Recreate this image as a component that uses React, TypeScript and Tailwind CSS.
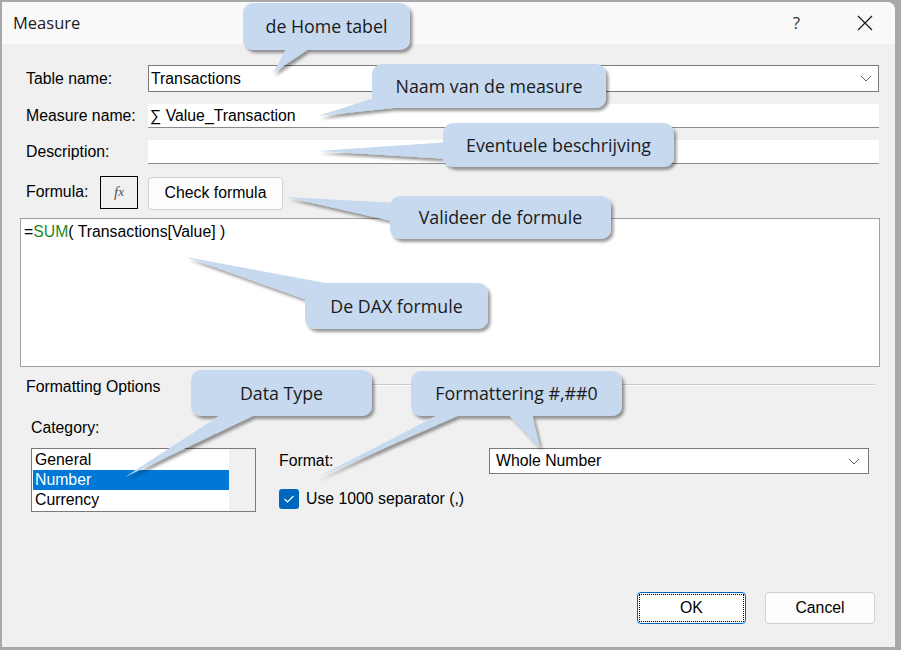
import React from 'react';

type Callout = {
  text: string;
  x: number;
  y: number;
  w: number;
  h: number;
  tails: [number, number][][];
};

const callouts: Callout[] = [
  { text: 'de Home tabel', x: 243, y: 3, w: 167, h: 47, tails: [[[287, 48], [310, 48], [273, 73]]] },
  { text: 'Naam van de measure', x: 372, y: 64, w: 234, h: 44, tails: [[[380, 96], [402, 107], [318, 116]]] },
  { text: 'Eventuele beschrijving', x: 443, y: 123, w: 231, h: 44, tails: [[[450, 142], [450, 159], [318, 151]]] },
  { text: 'Valideer de formule', x: 390, y: 196, w: 221, h: 43, tails: [[[396, 203], [396, 222], [286, 197]]] },
  { text: 'De DAX formule', x: 305, y: 283, w: 183, h: 46, tails: [[[336, 285], [307, 300], [186, 257]]] },
  { text: 'Data Type', x: 191, y: 370, w: 181, h: 46, tails: [[[222, 414], [257, 414], [125, 477]]] },
  {
    text: 'Formattering #,##0',
    x: 411,
    y: 371,
    w: 211,
    h: 45,
    tails: [
      [[440, 414], [462, 414], [316, 478]],
      [[508, 414], [532, 414], [540, 448]],
    ],
  },
];

const ui = { fontFamily: '"Liberation Sans", Arial, sans-serif' };
const seg = { fontFamily: '"Open Sans", "Noto Sans", sans-serif' };

function Chevron() {
  return (
    <svg width="12" height="7" viewBox="0 0 12 7">
      <polyline points="1,1 6,6 11,1" fill="none" stroke="#606060" strokeWidth="1" />
    </svg>
  );
}

function Overlay() {
  return (
    <>
      <svg className="absolute inset-0 pointer-events-none" width="901" height="650">
        <defs>
          <filter id="sh" x="-20%" y="-20%" width="140%" height="160%">
            <feDropShadow dx="2.5" dy="3" stdDeviation="1.6" floodColor="#000" floodOpacity="0.4" />
          </filter>
        </defs>
        {callouts.map((c, i) => (
          <g key={i} filter="url(#sh)" fill="#c6d9ef">
            <rect x={c.x} y={c.y} width={c.w} height={c.h} rx="10" />
            {c.tails.map((t, j) => (
              <polygon key={j} points={t.map((p) => p.join(',')).join(' ')} />
            ))}
          </g>
        ))}
      </svg>
      {callouts.map((c, i) => (
        <div
          key={i}
          className="absolute flex items-center justify-center text-[17.8px] text-[#1b1b1b] pointer-events-none"
          style={{ left: c.x, top: c.y, width: c.w, height: c.h, ...seg }}
        >
          {c.text}
        </div>
      ))}
    </>
  );
}

export default function App() {
  return (
    <div className="relative w-[901px] h-[650px] bg-[#a8a8a8] pt-[2px] pl-[2px] overflow-hidden" style={ui}>
      <div className="w-[893px] h-[645px] bg-[#f0f0f0] rounded-tr-[8px] flex flex-col overflow-hidden text-[15.8px] text-black">
        {/* title bar */}
        <div className="h-[42px] bg-[#f9f9f9] flex items-center pl-[11px] pr-[22px]">
          <span className="text-[16.5px] text-[#1a1a1a]" style={seg}>
            Measure
          </span>
          <span className="ml-auto text-[17px] text-[#333] mr-[57px]" style={seg}>
            ?
          </span>
          <svg width="16" height="16" viewBox="0 0 16 16">
            <path d="M1 1 L15 15 M15 1 L1 15" stroke="#1a1a1a" strokeWidth="1.2" />
          </svg>
        </div>

        <div className="flex flex-col pr-[16px]">
          {/* table name */}
          <div className="flex items-center h-[27px] mt-[21px]">
            <div className="w-[146px] pl-[24px]">Table name:</div>
            <div className="flex-1 h-full bg-white border border-[#7a7a7a] flex items-center justify-between pl-[2px] pr-[6px]">
              <span>Transactions</span>
              <Chevron />
            </div>
          </div>
          {/* measure name */}
          <div className="flex items-center h-[24px] mt-[12px]">
            <div className="w-[146px] pl-[24px]">Measure name:</div>
            <div className="flex-1 h-full bg-white border-b border-[#8a8a8a] flex items-center pl-[2px]">
              ∑ Value_Transaction
            </div>
          </div>
          {/* description */}
          <div className="flex items-center h-[24px] mt-[12px]">
            <div className="w-[146px] pl-[24px]">Description:</div>
            <div className="flex-1 h-full bg-white border-b border-[#8a8a8a]" />
          </div>
          {/* formula */}
          <div className="flex items-center h-[34px] mt-[11px]">
            <div className="w-[98px] pl-[24px]">Formula:</div>
            <div className="w-[38px] h-[33px] border border-black flex items-center justify-center text-[#555] italic text-[15px]" style={{ fontFamily: '"Liberation Serif", serif' }}>
              f<span className="text-[13px]">x</span>
            </div>
            <div className="ml-[10px] w-[135px] h-[33px] mt-[2px] bg-[#fdfdfd] border border-[#d0d0d0] rounded-[4px] flex items-center justify-center">
              Check formula
            </div>
          </div>
          {/* formula editor */}
          <div className="ml-[18px] mr-[-1px] mt-[9px] h-[149px] bg-white border border-[#a0a0a0] pl-[3px] pt-[4px] leading-[18px]">
            =<span className="text-[#1f8a1f]">SUM</span>( Transactions[Value] )
          </div>

          {/* formatting options */}
          <div className="flex items-center mt-[11px] h-[18px]">
            <span className="pl-[24px] w-[200px]">Formatting Options</span>
            <div className="flex-1 mr-[4px] h-[2px] border-t border-[#c8c8c8] bg-white mt-[-5px]" />
          </div>
          <div className="pl-[29px] mt-[23px] h-[18px] flex items-center">Category:</div>

          <div className="flex mt-[11px]">
            <div className="ml-[29px] w-[225px] h-[64px] border border-[#7a7a7a] bg-white flex">
              <div className="flex-1 flex flex-col pt-[1px] pl-[1px]">
                <div className="h-[20px] leading-[20px] pl-[2px]">General</div>
                <div className="h-[20px] leading-[20px] pl-[2px] bg-[#0078d7] text-white">Number</div>
                <div className="h-[20px] leading-[20px] pl-[2px]">Currency</div>
              </div>
              <div className="w-[26px] bg-[#f0f0f0]" />
            </div>
            <div className="ml-[23px] flex flex-col">
              <div className="flex items-center h-[26px]">
                <div className="w-[210px]">Format:</div>
                <div className="w-[380px] h-[26px] bg-white border border-[#7a7a7a] flex items-center justify-between pl-[6px] pr-[8px]">
                  <span>Whole Number</span>
                  <Chevron />
                </div>
              </div>
              <div className="flex items-center mt-[13px] h-[24px]">
                <div className="w-[20px] h-[20px] rounded-[3px] bg-[#0067c0] flex items-center justify-center">
                  <svg width="12" height="10" viewBox="0 0 12 10">
                    <polyline points="1.5,5 4.5,8 10.5,2" fill="none" stroke="white" strokeWidth="1.2" />
                  </svg>
                </div>
                <span className="ml-[7px]">Use 1000 separator (,)</span>
              </div>
            </div>
          </div>

          {/* buttons */}
          <div className="flex justify-end mt-[80px] pr-[4px] gap-[19px]">
            <div className="w-[109px] h-[32px] bg-white border border-[#0067c0] rounded-[4px] p-[1px]">
              <div className="w-full h-full border border-dotted border-black flex items-center justify-center">OK</div>
            </div>
            <div className="w-[110px] h-[32px] bg-[#fdfdfd] border border-[#cfcfcf] rounded-[4px] flex items-center justify-center">
              Cancel
            </div>
          </div>
        </div>
      </div>
      <Overlay />
    </div>
  );
}
